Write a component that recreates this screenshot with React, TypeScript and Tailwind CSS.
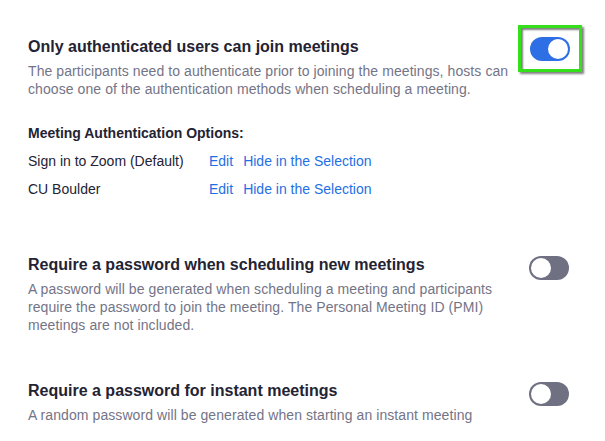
import React from 'react';

function Toggle({ on }: { on: boolean }) {
  return (
    <div
      className={`w-[40px] h-[24px] rounded-full p-[2px] flex ${
        on ? 'bg-[#2f6fe6] justify-end' : 'bg-[#6f7082] justify-start'
      }`}
    >
      <div className="w-[20px] h-[20px] rounded-full bg-white" />
    </div>
  );
}

export default function App() {
  const options = ['Sign in to Zoom (Default)', 'CU Boulder'];

  return (
    <div
      className="w-[605px] h-[441px] bg-white overflow-hidden pt-[25px] pl-[28px] pr-[23px]"
      style={{ fontFamily: '"Liberation Sans", Arial, sans-serif' }}
    >
      {/* Only authenticated users */}
      <div className="flex justify-between items-start">
        <div className="pt-[12px]">
          <h2 className="text-[16px] leading-[20px] font-bold text-[#232333]">
            Only authenticated users can join meetings
          </h2>
          <p className="mt-[5px] text-[14px] leading-[18px] tracking-[0.08px] text-[#747487] w-[490px]">
            The participants need to authenticate prior to joining the meetings, hosts can choose one of the
            authentication methods when scheduling a meeting.
          </p>
        </div>
        <div className="w-[66px] h-[47px] border-[3px] border-[#33e01a] flex items-center justify-center shadow-[2px_2px_2px_rgba(0,0,0,0.5),inset_2px_2px_2px_rgba(0,0,0,0.5)]">
          <Toggle on />
        </div>
      </div>

      {/* Authentication options */}
      <div className="mt-[25px] text-[14px] leading-[20px] text-[#232333]">
        <h3 className="font-bold">Meeting Authentication Options:</h3>
        <div className="mt-[8px] flex flex-col gap-[8px]">
          {options.map((opt) => (
            <div key={opt} className="flex">
              <span className="w-[181px]">{opt}</span>
              <a className="text-[#1f6fe5]">Edit</a>
              <a className="ml-[10px] text-[#1f6fe5]">Hide in the Selection</a>
            </div>
          ))}
        </div>
      </div>

      {/* Require password scheduling */}
      <div className="mt-[56px] flex justify-between items-start">
        <div>
          <h2 className="text-[16px] leading-[20px] font-bold text-[#232333]">
            Require a password when scheduling new meetings
          </h2>
          <p className="mt-[5px] text-[14px] leading-[18px] tracking-[0.08px] text-[#747487] w-[470px]">
            A password will be generated when scheduling a meeting and participants require the password to join
            the meeting. The Personal Meeting ID (PMI) meetings are not included.
          </p>
        </div>
        <div className="w-[66px] flex justify-center pt-[1px]">
          <Toggle on={false} />
        </div>
      </div>

      {/* Require password instant */}
      <div className="mt-[47px] flex justify-between items-start">
        <div>
          <h2 className="text-[16px] leading-[20px] font-bold text-[#232333]">
            Require a password for instant meetings
          </h2>
          <p className="mt-[5px] text-[14px] leading-[18px] tracking-[0.08px] text-[#747487] w-[470px]">
            A random password will be generated when starting an instant meeting
          </p>
        </div>
        <div className="w-[66px] flex justify-center pt-[1px]">
          <Toggle on={false} />
        </div>
      </div>
    </div>
  );
}
